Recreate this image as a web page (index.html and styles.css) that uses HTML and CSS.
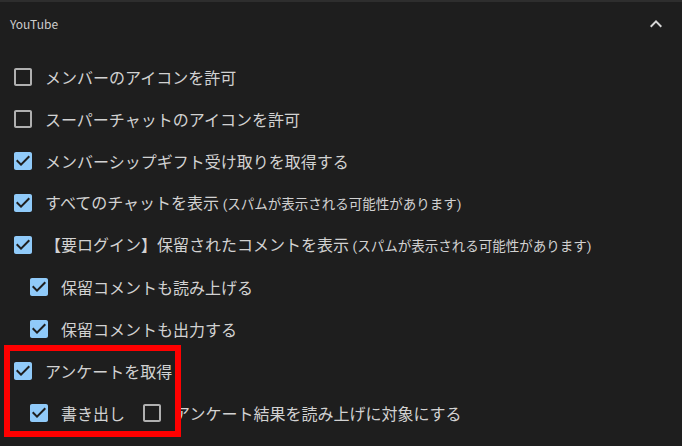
FILE: index.html
```html
<!DOCTYPE html>
<html>
<head>
<meta charset="utf-8">
<title>YouTube settings</title>
<link rel="stylesheet" href="styles.css">
</head>
<body>
<div class="panel">
  <div class="summary">
    <span class="title">YouTube</span>
    <svg class="chevron" viewBox="0 0 24 24" width="24" height="24"><path d="M12 8l-6 6 1.41 1.41L12 10.83l4.59 4.58L18 14z"/></svg>
  </div>

  <div class="details">
    <label class="row">
      <svg class="box off" viewBox="0 0 24 24" width="24" height="24"><path d="M19 5v14H5V5h14m0-2H5c-1.1 0-2 .9-2 2v14c0 1.1.9 2 2 2h14c1.1 0 2-.9 2-2V5c0-1.1-.9-2-2-2z"/></svg>
      <span class="text">メンバーのアイコンを許可</span>
    </label>
    <label class="row">
      <svg class="box off" viewBox="0 0 24 24" width="24" height="24"><path d="M19 5v14H5V5h14m0-2H5c-1.1 0-2 .9-2 2v14c0 1.1.9 2 2 2h14c1.1 0 2-.9 2-2V5c0-1.1-.9-2-2-2z"/></svg>
      <span class="text">スーパーチャットのアイコンを許可</span>
    </label>
    <label class="row">
      <svg class="box on" viewBox="0 0 24 24" width="24" height="24"><path d="M19 3H5c-1.11 0-2 .9-2 2v14c0 1.1.89 2 2 2h14c1.11 0 2-.9 2-2V5c0-1.1-.89-2-2-2zm-9 14l-5-5 1.41-1.410L10 14.17l7.59-7.59L19 8l-9 9z"/></svg>
      <span class="text">メンバーシップギフト受け取りを取得する</span>
    </label>
    <label class="row">
      <svg class="box on" viewBox="0 0 24 24" width="24" height="24"><path d="M19 3H5c-1.11 0-2 .9-2 2v14c0 1.1.89 2 2 2h14c1.11 0 2-.9 2-2V5c0-1.1-.89-2-2-2zm-9 14l-5-5 1.41-1.41L10 14.17l7.59-7.59L19 8l-9 9z"/></svg>
      <span class="text">すべてのチャットを表示 <small>(スパムが表示される可能性があります)</small></span>
    </label>
    <label class="row">
      <svg class="box on" viewBox="0 0 24 24" width="24" height="24"><path d="M19 3H5c-1.11 0-2 .9-2 2v14c0 1.1.89 2 2 2h14c1.11 0 2-.9 2-2V5c0-1.1-.89-2-2-2zm-9 14l-5-5 1.41-1.41L10 14.17l7.59-7.59L19 8l-9 9z"/></svg>
      <span class="text">【要ログイン】保留されたコメントを表示 <small>(スパムが表示される可能性があります)</small></span>
    </label>
    <label class="row sub">
      <svg class="box on" viewBox="0 0 24 24" width="24" height="24"><path d="M19 3H5c-1.11 0-2 .9-2 2v14c0 1.1.89 2 2 2h14c1.11 0 2-.9 2-2V5c0-1.1-.89-2-2-2zm-9 14l-5-5 1.41-1.41L10 14.17l7.59-7.59L19 8l-9 9z"/></svg>
      <span class="text">保留コメントも読み上げる</span>
    </label>
    <label class="row sub">
      <svg class="box on" viewBox="0 0 24 24" width="24" height="24"><path d="M19 3H5c-1.11 0-2 .9-2 2v14c0 1.1.89 2 2 2h14c1.11 0 2-.9 2-2V5c0-1.1-.89-2-2-2zm-9 14l-5-5 1.41-1.41L10 14.17l7.59-7.59L19 8l-9 9z"/></svg>
      <span class="text">保留コメントも出力する</span>
    </label>

    <div class="poll">
      <label class="row">
        <svg class="box on" viewBox="0 0 24 24" width="24" height="24"><path d="M19 3H5c-1.11 0-2 .9-2 2v14c0 1.1.89 2 2 2h14c1.11 0 2-.9 2-2V5c0-1.1-.89-2-2-2zm-9 14l-5-5 1.41-1.41L10 14.17l7.59-7.59L19 8l-9 9z"/></svg>
        <span class="text">アンケートを取得</span>
      </label>
      <div class="row sub">
        <label class="pair">
          <svg class="box on" viewBox="0 0 24 24" width="24" height="24"><path d="M19 3H5c-1.11 0-2 .9-2 2v14c0 1.1.89 2 2 2h14c1.11 0 2-.9 2-2V5c0-1.1-.89-2-2-2zm-9 14l-5-5 1.41-1.41L10 14.17l7.59-7.59L19 8l-9 9z"/></svg>
          <span class="text">書き出し</span>
        </label>
        <label class="pair second">
          <svg class="box off" viewBox="0 0 24 24" width="24" height="24"><path d="M19 5v14H5V5h14m0-2H5c-1.1 0-2 .9-2 2v14c0 1.1.9 2 2 2h14c1.1 0 2-.9 2-2V5c0-1.1-.9-2-2-2z"/></svg>
          <span class="text">アンケート結果を読み上げに対象にする</span>
        </label>
      </div>
      <div class="highlight"></div>
    </div>
  </div>
</div>
</body>
</html>
```

FILE: styles.css
```css
body {margin: 0; background-color: #1e1e1e; font-family: "Roboto", "Noto Sans CJK JP", sans-serif; color: #d0d0d0;}
.panel {border-top: 2px solid #2e2e2e; background-color: #1e1e1e; height: 444px; overflow: hidden;}
.summary {display: flex; align-items: center; justify-content: space-between; height: 42px; padding: 0 14px 0 10px;}
.title {font-size: 12px; color: #cccccc; font-family: "Noto Sans CJK JP", sans-serif;}
.chevron {fill: #d8d8d8; margin-top: 2px;}
.details {padding-top: 12px;}
.row {display: flex; align-items: center; height: 42px; padding-left: 11px; cursor: pointer;}
.row.sub {padding-left: 27px;}
.box {flex: none; margin-right: 10px;}
.box.off {fill: #b0b0b0;}
.box.on {fill: #90caf9;}
.text {font-size: 16px; line-height: 24px; white-space: nowrap; color: #d2d2d2; font-family: "Noto Sans CJK JP", sans-serif;}
.text small {font-size: 13.5px; font-family: "Roboto", "Noto Sans CJK JP", sans-serif;}
.pair {display: flex; align-items: center;}
.pair.second {margin-left: 15px;}
.poll {position: relative;}
.highlight {position: absolute; left: 4px; top: -5px; width: 165px; height: 80px; border: 6px solid #ff0000;}
```
